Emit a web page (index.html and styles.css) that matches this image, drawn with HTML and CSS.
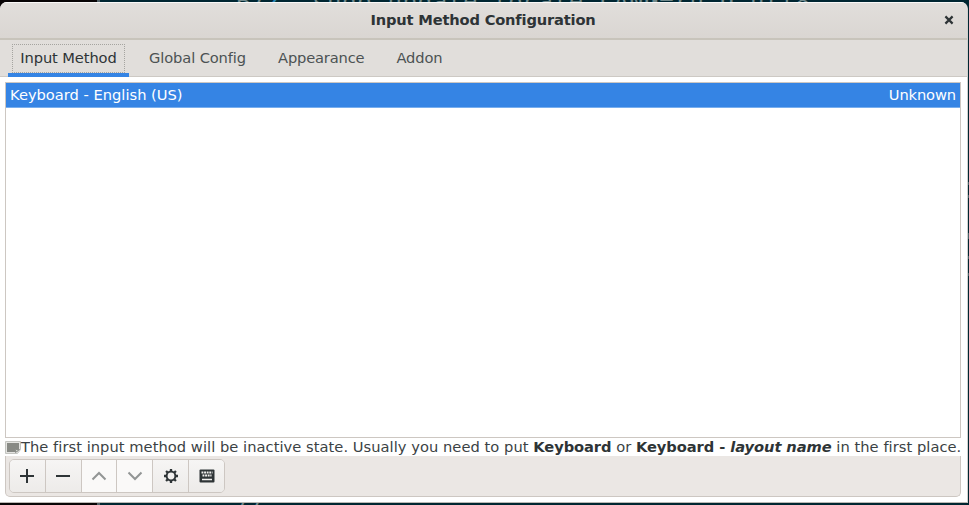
FILE: index.html
```html
<!DOCTYPE html>
<html lang="en">
<head>
<meta charset="utf-8">
<title>Input Method Configuration</title>
<link rel="stylesheet" href="styles.css">
</head>
<body>
<div class="desktop">
  <div class="terminal terminal-top"><span class="line-no">B7<em>2</em></span><span class="command">sudo update-locale LANG=ru_U.utf8</span></div>
  <div class="terminal terminal-bottom"><span class="line-no">//</span></div>
  <i class="speck s1"></i><i class="speck s2"></i><i class="speck s3"></i><i class="speck s4"></i><i class="speck s5"></i>
  <main class="window">
    <header class="titlebar">
      <h1 class="title">Input Method Configuration</h1>
      <button class="close" aria-label="Close"><svg width="10" height="10" viewBox="0 0 10 10"><path d="M1.4 1.4 8.6 8.6M8.6 1.4 1.4 8.6" stroke="#2e3436" stroke-width="2.2"/></svg></button>
    </header>
    <nav class="tabs">
      <a class="tab active"><span class="focus">Input Method</span></a>
      <a class="tab global">Global Config</a>
      <a class="tab appearance">Appearance</a>
      <a class="tab addon">Addon</a>
    </nav>
    <section class="page">
      <div class="list">
        <div class="row"><span>Keyboard - English (US)</span><span class="language">Unknown</span></div>
      </div>
      <div class="info">
        <svg class="info-icon" width="16" height="16" viewBox="0 0 16 16"><path d="M.5 2.500h15v8l-3 4H.5z" fill="#e4e4e1" stroke="#c3c4c0"/><path d="M2 4h12v6l-2 3H2z" fill="#888a85"/><path d="M10.500 13.500v-3h4z" fill="#d3d7cf" stroke="#8a8c88"/></svg>
        <p class="message">The first input method will be inactive state. Usually you need to put <b>Keyboard</b> or <b>Keyboard - <i>layout name</i></b> in the first place.</p>
      </div>
      <div class="toolbar">
        <div class="buttons">
          <button><svg viewBox="0 0 16 16"><path d="M8 1v14M1 8h14" stroke="#2e3436" stroke-width="2"/></svg></button>
          <button><svg viewBox="0 0 16 16"><path d="M1 8h14" stroke="#2e3436" stroke-width="2"/></svg></button>
          <button class="disabled"><svg viewBox="0 0 16 16"><path d="M1.500 11.500 8 5l6.500 6.500" fill="none" stroke="#929595" stroke-width="2"/></svg></button>
          <button class="disabled"><svg viewBox="0 0 16 16"><path d="M1.500 4.500 8 11l6.500-6.500" fill="none" stroke="#929595" stroke-width="2"/></svg></button>
          <button><svg viewBox="0 0 16 16"><circle cx="8" cy="8" r="4.400" fill="none" stroke="#2e3436" stroke-width="2"/><path d="M8 1v2.500M8 12.500v2.500M1 8h2.500M12.500 8H15M3.050 3.050 4.800 4.800M11.200 11.200l1.750 1.750M3.050 12.950 4.800 11.200M11.200 4.800l1.750-1.750" stroke="#2e3436" stroke-width="2.300"/></svg></button>
          <button><svg viewBox="0 0 16 16"><rect x=".5" y="1.500" width="15" height="13" rx="1" fill="#2e3436"/><path d="M2.500 4.500h11M3.500 7.500h9" stroke="#f1f0ee" stroke-width="2" stroke-dasharray="1.900 .7"/><path d="M3 11.500h10" stroke="#f1f0ee" stroke-width="1.700"/></svg></button>
        </div>
      </div>
    </section>
  </main>
</div>
</body>
</html>
```
FILE: styles.css
```css
* { box-sizing: border-box; }
body { margin: 0; font: 14.667px/19px "DejaVu Sans", sans-serif; color: #3b4244; }
.desktop { position: relative; width: 969px; height: 505px; padding-top: 2px; overflow: hidden; background: linear-gradient(90deg, #080506 0 97px, #506066 97px 100px, #002631 100px); }
.terminal { position: absolute; left: 236px; height: 24px; font: 24px/24px "DejaVu Sans Mono", monospace; letter-spacing: .1px; color: #71898b; white-space: pre; }
.terminal em { font-style: normal; color: #2a87b5; }
.terminal-top { top: -10px; }
.terminal-bottom { top: 491px; }
.line-no { display: inline-block; width: 76px; }
.command { letter-spacing: .65px; }
.speck { position: absolute; left: 967px; width: 2px; height: 3px; background: #476067; }
.s1 { top: 182px; } .s2 { top: 195px; } .s3 { top: 233px; height: 6px; } .s4 { top: 256px; } .s5 { top: 273px; }
.window { position: relative; display: flex; flex-direction: column; width: 968px; height: 501px; background: #fff; border-radius: 7px 7px 0 0; border-right: 1px solid #d1d0cd; border-bottom: 1px solid #bbb8b4; overflow: hidden; }
.titlebar { display: flex; align-items: center; height: 38px; flex: none; background: linear-gradient(#e1dedb, #dad6d2); border-top: 1px solid #f9f8f7; border-bottom: 2px solid #c8c4bb; }
.title { flex: 1; margin: -2px 0 0; padding-left: 35px; text-align: center; font-size: 14.667px; letter-spacing: -.18px; color: #2e3436; }
.close { width: 36px; height: 34px; padding: 0 0 1px; border: 0; background: none; line-height: 0; }
.tabs { display: flex; flex: none; height: 37px; padding-left: 8px; background: #e1dedb; border-bottom: 1px solid #cdc9c4; }
.tab { height: 37px; line-height: 36px; margin-right: 32px; letter-spacing: -.11px; color: #4c5253; }
.tab.appearance { letter-spacing: -.16px; }
.tab.addon { letter-spacing: -.1px; }
.tab.active { width: 121px; margin-right: 20px; padding: 4px 4px 0; border-bottom: 4px solid #3584e4; color: #2e3436; }
.focus { display: block; height: 29px; line-height: 26px; border: 1px dotted #a5a4a0; text-align: center; white-space: nowrap; }
.page { display: flex; flex: 1; flex-direction: column; padding: 5px 6px 5px 5px; }
.list { height: 356px; border: 1px solid #cdc7c2; background: #fff; }
.row { display: flex; justify-content: space-between; height: 25px; padding: 0 4px; line-height: 24px; color: #fff; background: #3584e4; border-bottom: 1px solid #78aeee; }
.language { letter-spacing: -.12px; }
.info { display: flex; align-items: center; height: 18px; white-space: nowrap; }
.info-icon { flex: none; }
.message { margin: -2px 0 0; letter-spacing: .045px; }
.message b { color: #2e3436; letter-spacing: -.07px; }
.toolbar { height: 41px; padding: 3px; background: #ebe7e4; border: 1px solid #cdc7c2; border-top: 0; border-radius: 0 0 5px 5px; }
.buttons { display: flex; width: 216px; height: 34px; border: 1px solid #cdc7c2; border-radius: 5px; overflow: hidden; }
.buttons button { display: grid; place-items: center; flex: 1; padding: 0; border: 0; border-right: 1px solid #cdc7c2; background: linear-gradient(#f6f5f4, #edebe9); }
.buttons button:last-child { border-right: 0; }
.buttons .disabled { background: #faf9f8; }
.buttons svg { width: 16px; height: 16px; }
```
